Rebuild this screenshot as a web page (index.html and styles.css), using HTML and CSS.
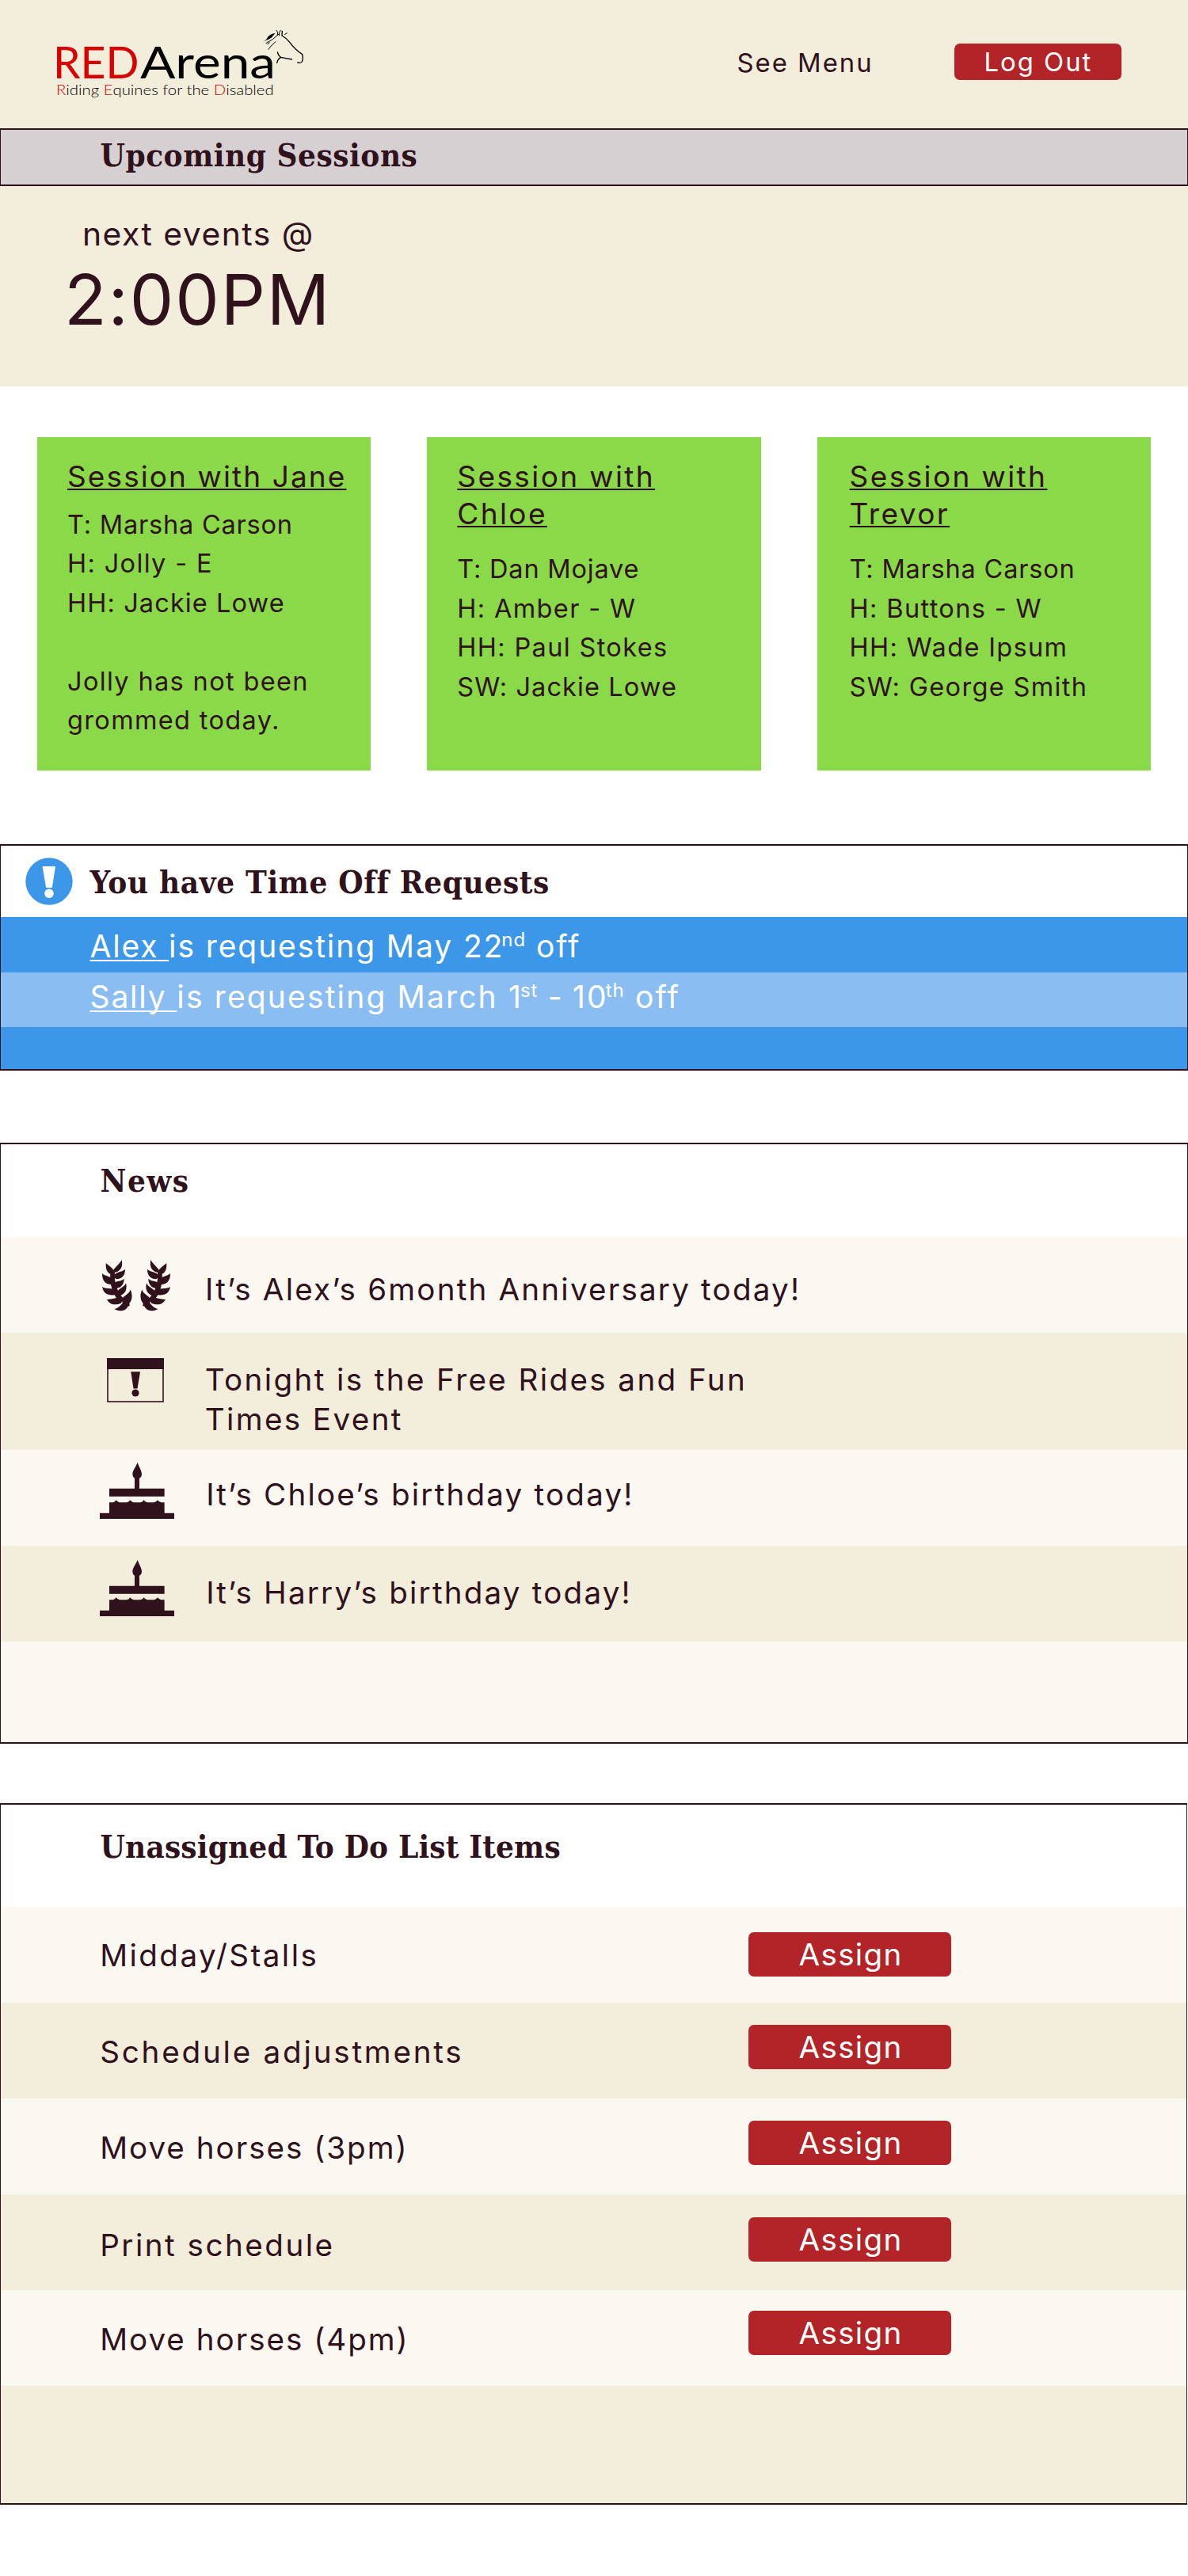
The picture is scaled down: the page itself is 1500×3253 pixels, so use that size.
FILE: index.html
```
<!DOCTYPE html>
<html lang="en">
<head>
<meta charset="utf-8">
<title>RED Arena</title>
<link rel="stylesheet" href="styles.css">
</head>
<body>
<svg width="0" height="0" class="defs">
  <defs>
    <g id="branch">
      <path d="M71 76C70 100 75 112 92 120L104 116C103 98 88 90 71 76Z"/>
      <path d="M131 64C136 85 130 105 108 111L98 110C98 95 120 85 131 64Z"/>
      <path d="M144 99C144 120 135 136 110 137L100 128C104 108 130 112 144 99Z"/>
      <path d="M57 115C57 140 66 156 92 158L102 145C95 125 70 128 57 115Z"/>
      <path d="M140 135C140 160 125 172 104 172L98 155C110 140 128 148 140 135Z"/>
      <path d="M57 166C62 190 76 200 104 197L112 185C100 165 75 178 57 166Z"/>
      <path d="M147 152C153 175 145 195 122 200L112 188C120 170 140 170 147 152Z"/>
      <path d="M75 214C85 233 105 238 128 228L134 215C115 200 100 215 75 214Z"/>
      <path d="M164 177C175 200 168 220 160 228L161 238L155 240C145 258 125 262 103 250C120 245 125 238 134 228L132 212C140 198 158 195 164 177Z"/>
      <path d="M88 110L105 110C102 150 112 185 142 215L125 228C95 190 85 160 88 110Z"/>
    </g>
    <g id="cake">
      <path d="M190 53C196 70 206 84 206 97Q206 107 197 112V151H292V181H83V151H179V112Q171 107 171 97C171 84 183 70 190 53Z"/>
      <path d="M83 204H97Q106 201 109 195Q114 203 122 204H149Q158 202 162 195Q167 203 175 204H201Q210 202 214 195Q219 203 227 204H252Q261 202 266 195Q271 203 280 204H292V244H330V266H47V244H83Z"/>
    </g>
  </defs>
</svg>

<header class="header">
  <svg class="logo" viewBox="0 0 1080 360" width="360" height="120">
    <text class="logo-red" x="51" y="236" textLength="325" lengthAdjust="spacingAndGlyphs">RED</text>
    <text class="logo-black" x="381" y="236" textLength="513" lengthAdjust="spacingAndGlyphs">Arena</text>
    <text class="logo-tag" x="63" y="300" textLength="824" lengthAdjust="spacingAndGlyphs"><tspan class="r">R</tspan>iding <tspan class="r">E</tspan>quines for the <tspan class="r">D</tspan>isabled</text>
    <path d="M845 98Q858 94 862 84Q872 67 893 67Q884 74 880 82Q866 92 845 98Z"/>
    <g fill="none" stroke="#000" stroke-width="3">
      <path d="M857 104Q884 92 907 68M897 54Q905 62 901 74M913 54Q905 64 908 76M938 65L928 71M895 97Q878 110 866 128M872 100L862 108"/>
      <path stroke-width="4" d="M919 56L918 75Q935 84 947 100Q965 125 995 146L997 154Q998 174 990 177Q983 180 976 176"/>
      <path stroke-width="4" d="M901 136Q903 150 914 157Q930 161 957 165M914 157Q900 165 899 180"/>
    </g>
  </svg>
  <a class="menu-link">See Menu</a>
  <a class="btn logout">Log Out</a>
</header>

<div class="section-bar"><h2>Upcoming Sessions</h2></div>
<section class="hero">
  <div class="hero-label">next events @</div>
  <div class="hero-time">2:00PM</div>
</section>

<section class="cards">
  <article class="card short">
    <h3>Session with Jane</h3>
    <p class="tight">T: Marsha Carson</p>
    <p>H: Jolly - E</p>
    <p class="snug">HH: Jackie Lowe</p>
    <p class="note">Jolly has not been<br>grommed today.</p>
  </article>
  <article class="card">
    <h3>Session with<br>Chloe</h3>
    <p class="tight">T: Dan Mojave</p>
    <p>H: Amber - W</p>
    <p>HH: Paul Stokes</p>
    <p class="snug">SW: Jackie Lowe</p>
  </article>
  <article class="card indent">
    <h3>Session with<br>Trevor</h3>
    <p class="tight">T: Marsha Carson</p>
    <p>H: Buttons - W</p>
    <p>HH: Wade Ipsum</p>
    <p>SW: George Smith</p>
  </article>
</section>

<section class="panel requests">
  <div class="panel-head">
    <svg class="alert" viewBox="0 0 60 60" width="60" height="60">
      <circle cx="30" cy="30" r="29.7" fill="#3d97e9"/>
      <path d="M21.5 11H38L33.8 38H26.2Z" fill="#fff"/>
      <circle cx="30" cy="45.3" r="5.8" fill="#fff"/>
    </svg>
    <h2>You have Time Off Requests</h2>
  </div>
  <div class="request first"><u>Alex </u><span>is requesting May 22<sup>nd</sup> off</span></div>
  <div class="request second"><u>Sally </u><span>is requesting March 1<sup>st</sup><span class="dash"> - </span>10<sup>th</sup> off</span></div>
  <div class="request-end"></div>
</section>

<section class="panel news">
  <div class="panel-head"><h2>News</h2></div>
  <div class="news-row anniversary">
    <svg class="icon" viewBox="57 64 258 194" width="86" height="64.7"><use href="#branch"/><use href="#branch" transform="translate(372 0) scale(-1 1)"/></svg>
    <p>It’s Alex’s 6month Anniversary today!</p>
  </div>
  <div class="news-row event">
    <svg class="icon" viewBox="0 0 72 56" width="72" height="56">
      <rect x="1" y="1" width="70" height="54" fill="none" stroke="#30121d" stroke-width="1.6"/>
      <path d="M0 0H72V14H0ZM30.3 17.3H42L38.5 38.5H33.5Z"/>
      <circle cx="36" cy="44" r="4.6"/>
    </svg>
    <p>Tonight is the Free Rides and Fun<br>Times Event</p>
  </div>
  <div class="news-row birthday">
    <svg class="icon" viewBox="47 53 283 213" width="94.3" height="71"><use href="#cake"/></svg>
    <p>It’s Chloe’s birthday today!</p>
  </div>
  <div class="news-row birthday later">
    <svg class="icon" viewBox="47 53 283 213" width="94.3" height="71"><use href="#cake"/></svg>
    <p>It’s Harry’s birthday today!</p>
  </div>
  <div class="news-end"></div>
</section>

<section class="panel todo">
  <div class="panel-head"><h2>Unassigned To Do List Items</h2></div>
  <div class="todo-row stalls"><p>Midday/Stalls</p><a class="btn assign">Assign</a></div>
  <div class="todo-row adjust"><p>Schedule adjustments</p><a class="btn assign">Assign</a></div>
  <div class="todo-row move"><p>Move horses (3pm)</p><a class="btn assign">Assign</a></div>
  <div class="todo-row print"><p>Print schedule</p><a class="btn assign">Assign</a></div>
  <div class="todo-row move late"><p>Move horses (4pm)</p><a class="btn assign">Assign</a></div>
  <div class="todo-end"></div>
</section>
</body>
</html>
```
FILE: styles.css
```
* { box-sizing: border-box; }
body {
  margin: 0;
  width: 1500px;
  min-height: 3253px;
  background: #fff;
  color: #30121d;
  font-family: Inter, "Liberation Sans", sans-serif;
}
h2, h3, p { margin: 0; font-weight: 400; }
h2 {
  font: bold 40px "DejaVu Serif Condensed", "DejaVu Serif", serif;
  letter-spacing: 0.55px;
  white-space: nowrap;
}
svg { display: block; flex: none; }
.defs { position: absolute; }
.btn {
  display: block;
  flex: none;
  background: #b22427;
  color: #fff;
  border-radius: 7px;
  white-space: nowrap;
}

/* Header */
.header {
  display: flex;
  align-items: flex-start;
  height: 162px;
  background: #f3eddb;
}
.logo { margin: 20px 0 0 50px; }
.logo text { font-family: Lato, sans-serif; }
.logo .logo-red { font-size: 170px; fill: #d80000; }
.logo .logo-black { font-size: 170px; fill: #000; }
.logo .logo-tag { font-size: 52px; font-weight: 300; fill: #000; }
.logo .r { fill: #d80000; }
.menu-link {
  margin: 55.8px 0 0 520.5px;
  width: 274px;
  font-size: 32.8px;
  line-height: 46px;
  letter-spacing: 2px;
}
.logout {
  margin-top: 54.5px;
  width: 211px;
  height: 46px;
  padding-left: 38px;
  font-size: 32.8px;
  line-height: 46.6px;
  letter-spacing: 2px;
}

/* Upcoming sessions */
.section-bar {
  height: 73px;
  padding-left: 125.5px;
  background: #d6d0d2;
  border: solid #30121d;
  border-width: 2px 1px;
}
.section-bar h2 { line-height: 64.5px; }
.hero {
  height: 253px;
  padding-top: 37.2px;
  background: #f3eddb;
}
.hero-label {
  padding-left: 104px;
  font-size: 40.8px;
  line-height: 46px;
  letter-spacing: 1.5px;
}
.hero-time {
  margin-top: 14.8px;
  padding-left: 81px;
  font-size: 88px;
  line-height: 90px;
  letter-spacing: 1.9px;
}

/* Session cards */
.cards {
  display: flex;
  gap: 71px;
  margin-top: 64px;
  padding-left: 47px;
}
.card {
  width: 421.3px;
  height: 421.3px;
  padding: 27.2px 0 0 38px;
  background: #89d948;
  font-size: 32.5px;
  line-height: 49.5px;
  letter-spacing: 1.35px;
  white-space: nowrap;
}
.card h3 {
  margin-bottom: 21.3px;
  font-size: 37px;
  line-height: 46.8px;
  letter-spacing: 2.4px;
  text-decoration: underline;
  text-decoration-thickness: 2px;
  text-underline-offset: 2px;
  text-decoration-skip-ink: none;
}
.card.short h3 { margin-bottom: 12px; letter-spacing: 2.1px; }
.card.indent { padding-left: 41px; }
.card .tight { letter-spacing: 0.8px; }
.card .snug { letter-spacing: 1.1px; }
.card .note { margin-top: 49.4px; }

/* Bordered panels */
.panel {
  border: solid #30121d;
  border-width: 2px 1px;
}
.panel h2 { padding-left: 125.5px; }

.requests { height: 286px; margin-top: 92.7px; }
.requests .panel-head {
  display: flex;
  height: 90.3px;
}
.alert { margin: 15px 0 0 30.5px; }
.requests h2 { padding-left: 22px; line-height: 92.5px; letter-spacing: 0.65px; }
.request {
  height: 69.6px;
  padding-left: 112.6px;
  background: #3d97e9;
  color: #fff;
  font-size: 39px;
  letter-spacing: 1.9px;
  white-space: pre;
}
.request u {
  letter-spacing: 1.8px;
  text-decoration-thickness: 2px;
  text-underline-offset: 2.5px;
  text-decoration-skip-ink: none;
}
.request sup {
  margin-left: -3px;
  font-size: 24px;
  line-height: 0;
  letter-spacing: 1px;
  vertical-align: 14px;
}
.request .dash { letter-spacing: 1.2px; }
.request.first { line-height: 73px; }
.request.second { line-height: 62.6px; background: #8abef2; letter-spacing: 2.15px; }
.request-end { height: 52.5px; background: #3d97e9; }

/* News */
.news { height: 759px; margin-top: 91px; }
.news .panel-head { height: 116.8px; }
.news h2 { line-height: 92.5px; letter-spacing: 1.5px; }
.news-row {
  display: flex;
  align-items: flex-start;
  height: 121.2px;
  background: #fbf8f1;
  font-size: 38.6px;
  line-height: 50.3px;
  letter-spacing: 2.2px;
  white-space: nowrap;
}
.news-row .icon { fill: #30121d; }
.anniversary .icon { margin: 29.7px 44.5px 0 127.5px; }
.anniversary p { margin-top: 41px; }
.event { height: 148px; background: #f3eddb; letter-spacing: 2.4px; }
.event .icon { margin: 32px 52px 0 133.7px; }
.event p { margin-top: 33.8px; }
.birthday .icon { margin: 16.2px 40.2px 0 124.7px; }
.birthday p { margin-top: 31.4px; letter-spacing: 2.2px; }
.birthday.later { height: 120.8px; background: #f3eddb; }
.later .icon { margin-top: 17.5px; }
.later p { margin-top: 34px; }
.news-end { height: 127px; background: #fbf8f1; }

/* To do list */
.todo { width: 1499px; height: 886px; margin-top: 75px; }
.todo .panel-head { height: 128.6px; }
.todo h2 { line-height: 106.5px; letter-spacing: 0.18px; }
.todo-row {
  display: flex;
  align-items: flex-start;
  height: 121.1px;
  padding-left: 125.2px;
  background: #fbf8f1;
  font-size: 38.6px;
  line-height: 50px;
  white-space: nowrap;
}
.todo-row:nth-child(odd) { background: #f3eddb; }
.todo-row p { width: 818.9px; margin-top: 37.2px; }
.assign {
  width: 256.3px;
  height: 56px;
  padding-left: 63.5px;
  line-height: 57px;
  letter-spacing: 1.3px;
  margin-top: 28.6px;
}
.stalls p { margin-top: 36px; letter-spacing: 2.45px; }
.stalls .assign { margin-top: 32.3px; }
.adjust p { letter-spacing: 2.8px; }
.move p { letter-spacing: 2px; }
.print p { margin-top: 39.3px; letter-spacing: 2.5px; }
.print .assign { margin-top: 29px; }
.late .assign { margin-top: 26px; }
.todo-end { height: 147.9px; background: #f3eddb; }
```
